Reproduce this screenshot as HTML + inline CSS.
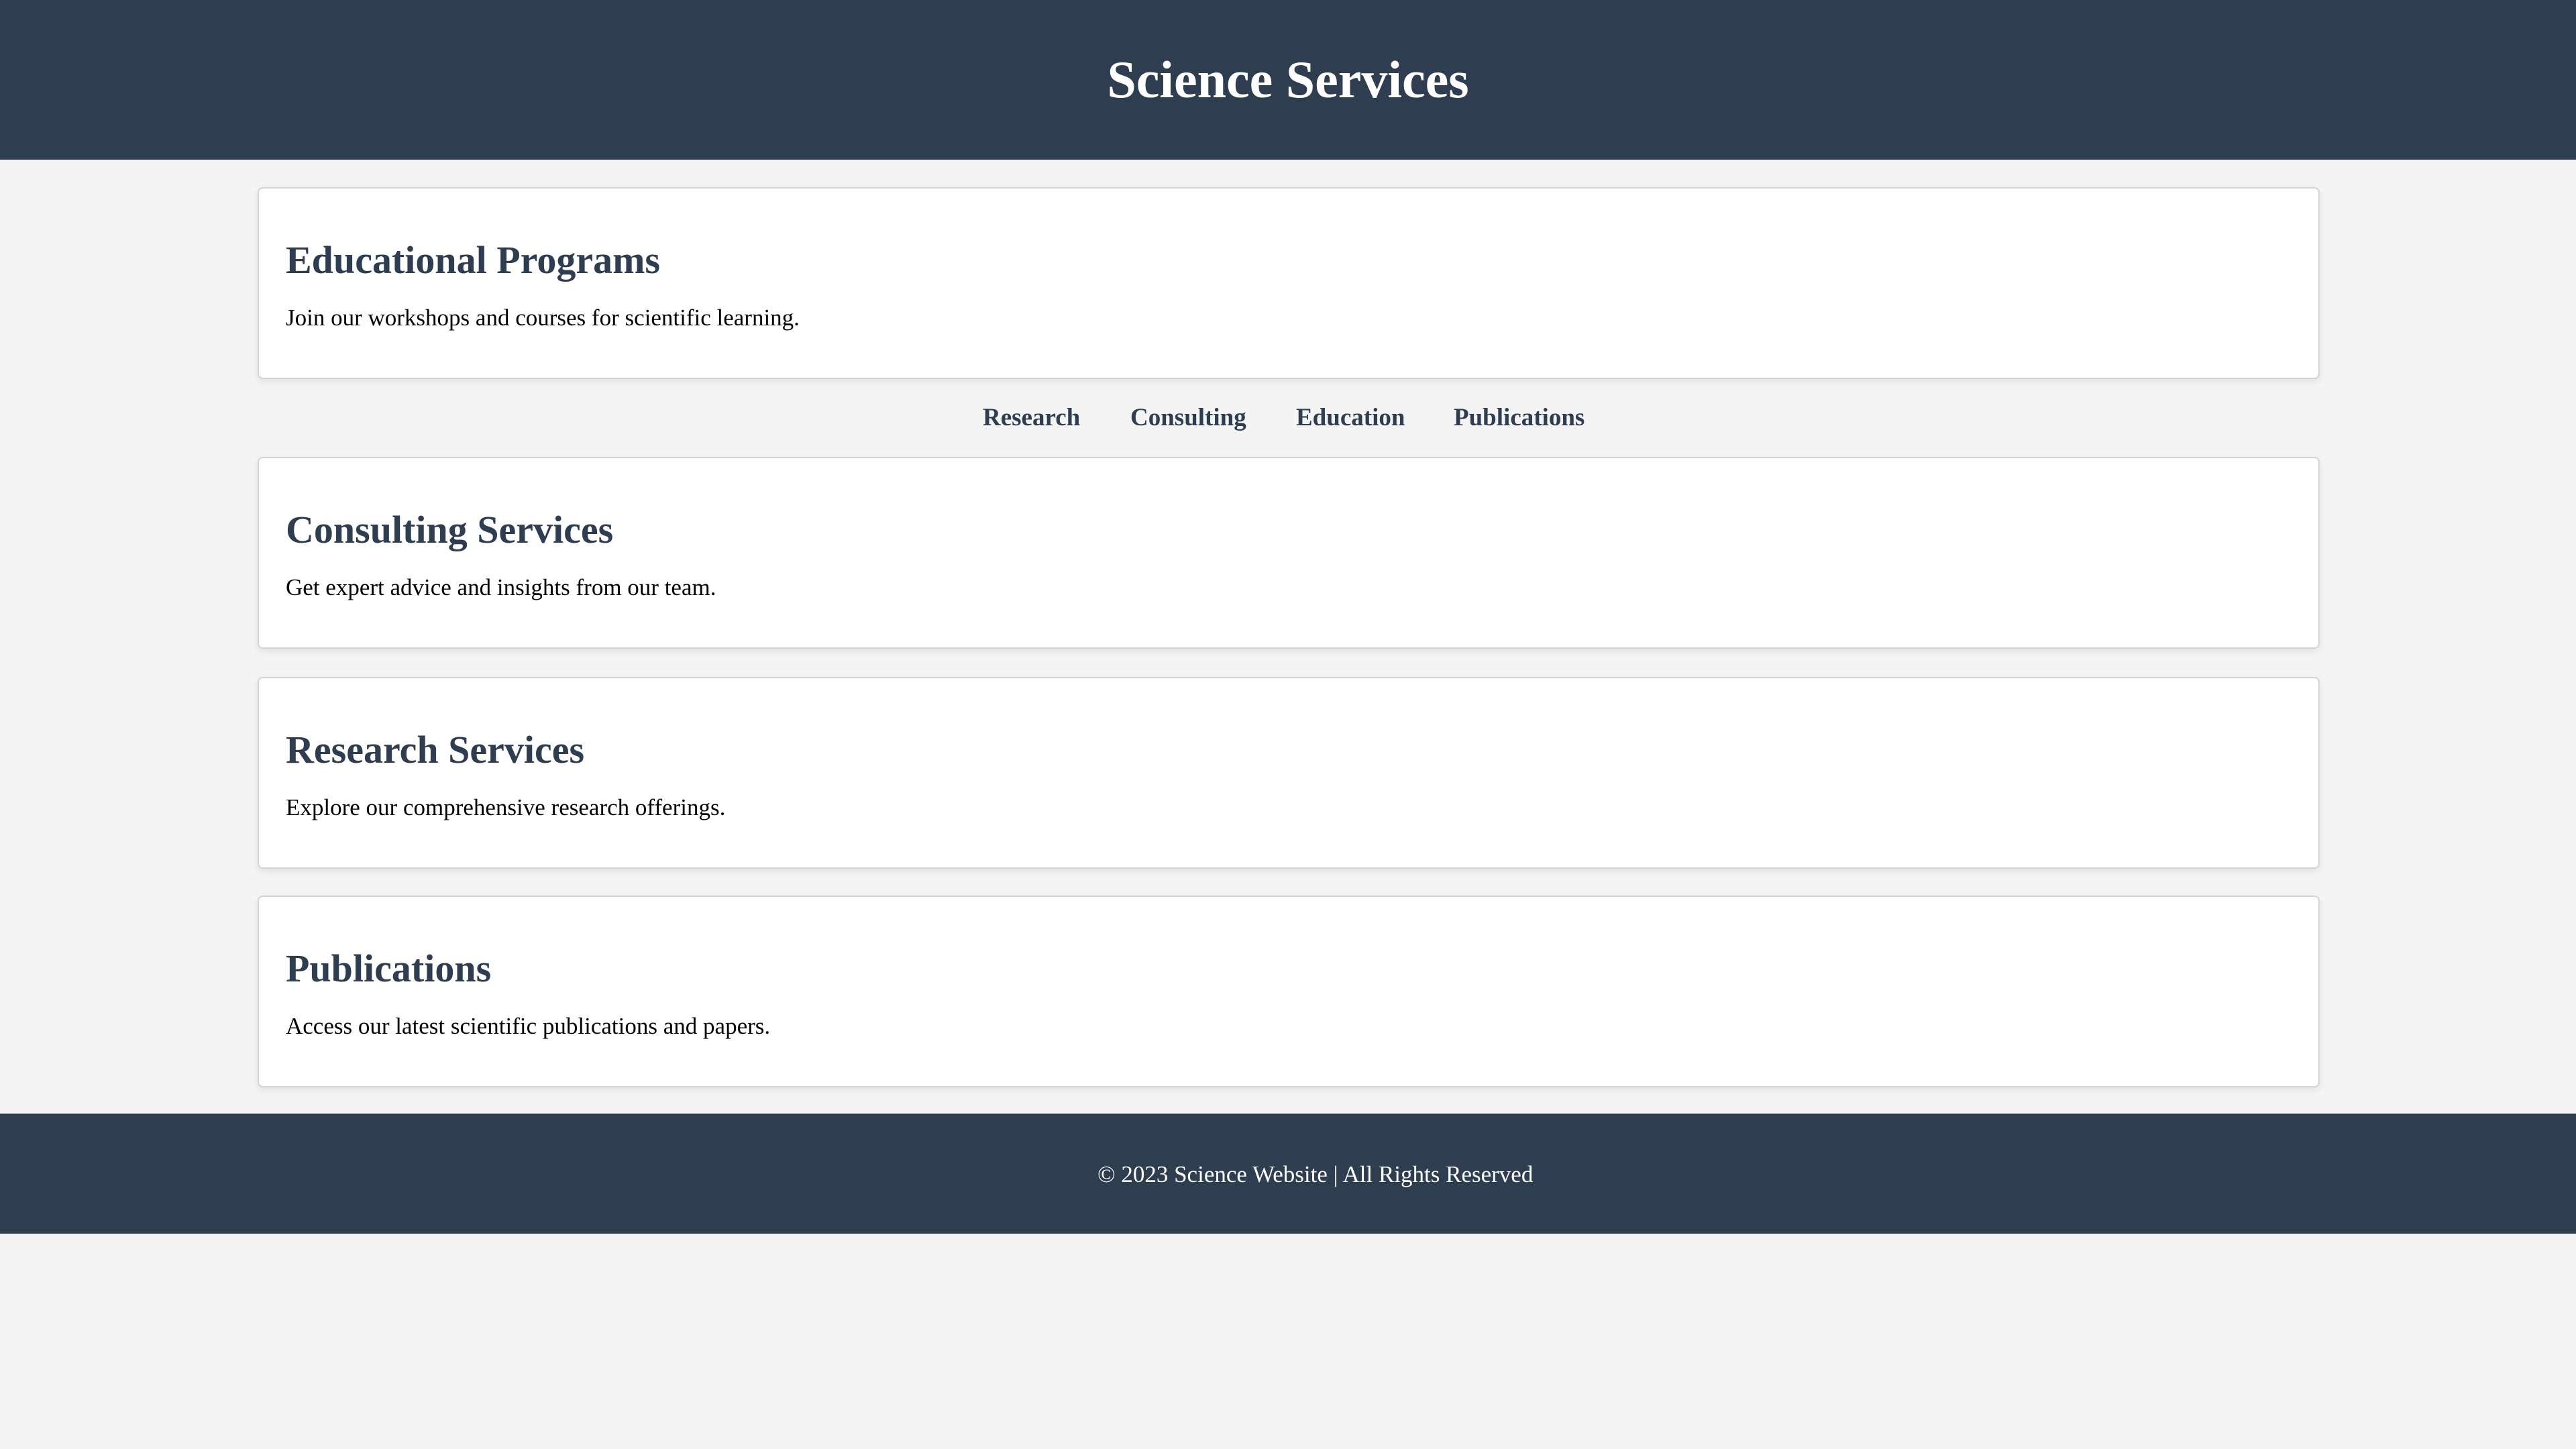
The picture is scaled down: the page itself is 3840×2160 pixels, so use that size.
<!DOCTYPE html>
<html><head><meta charset="utf-8"><style>
html,body{margin:0;padding:0;width:3840px;height:2160px;background:#f4f4f4;overflow:hidden;font-family:"Liberation Serif",serif;}
.hdr{position:absolute;left:0;top:0;width:3840px;height:238px;background:#2f3d50;}
.t{position:absolute;left:0;width:3840px;text-align:center;white-space:nowrap;line-height:1;}
.card{position:absolute;left:384px;width:3070px;height:282px;background:#fff;border:2px solid #d4d4d4;border-radius:8px;box-shadow:0 4px 10px rgba(0,0,0,0.08);}
.card h2{position:absolute;left:40px;margin:0;font-size:58px;font-weight:bold;color:#2f3d50;line-height:1;white-space:nowrap;}
.card p{position:absolute;left:40px;margin:0;font-size:35px;color:#000;line-height:1;white-space:nowrap;}
.nav{position:absolute;top:604px;font-size:37px;font-weight:bold;color:#2f3d50;line-height:1;white-space:nowrap;}
.ftr{position:absolute;left:0;top:1660px;width:3840px;height:179px;background:#2f3d50;}
</style></head><body>
<div class="hdr"><div class="t" style="top:80px;font-size:78px;font-weight:bold;color:#fff;">Science Services</div></div>

<div class="card" style="top:279px;"><h2 style="top:78px;">Educational Programs</h2><p style="top:175px;">Join our workshops and courses for scientific learning.</p></div>

<span class="nav" style="left:1465px;">Research</span>
<span class="nav" style="left:1685px;">Consulting</span>
<span class="nav" style="left:1932px;">Education</span>
<span class="nav" style="left:2167px;">Publications</span>

<div class="card" style="top:681px;"><h2 style="top:78px;">Consulting Services</h2><p style="top:175px;">Get expert advice and insights from our team.</p></div>
<div class="card" style="top:1009px;"><h2 style="top:78px;">Research Services</h2><p style="top:175px;">Explore our comprehensive research offerings.</p></div>
<div class="card" style="top:1335px;"><h2 style="top:78px;">Publications</h2><p style="top:175px;">Access our latest scientific publications and papers.</p></div>

<div class="ftr"><div style="position:absolute;left:1636px;top:73px;font-size:35px;color:#fff;line-height:1;white-space:nowrap;">© 2023 Science Website | All Rights Reserved</div></div>
</body></html>
